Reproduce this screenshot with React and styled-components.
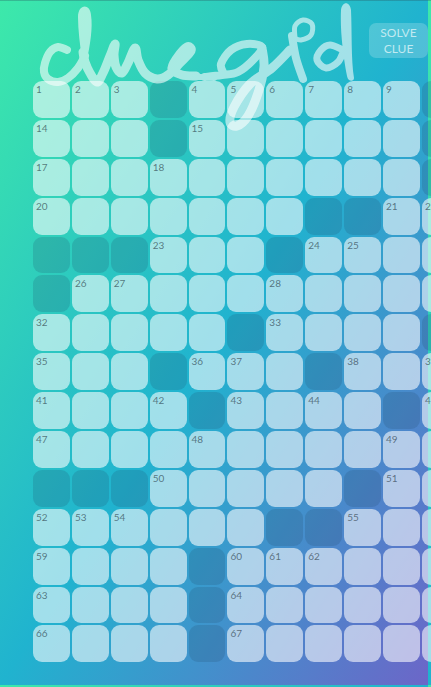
import React from "react";
import styled, { createGlobalStyle } from "styled-components";

const Global = createGlobalStyle`
  html {
    height: 100%;
    background-image: linear-gradient(to bottom right, #3de9aa 0%, #20b3cf 50%, #6c66c8 100%);
    background-size: 428px 685px;
    background-repeat: repeat;
  }
  body {
    margin: 0;
    font-family: "Lato", "Open Sans", sans-serif;
  }
`;

const Page = styled.main`
  position: relative;
  width: 431px;
  height: 687px;
  overflow: hidden;
  box-shadow: inset 0 1px 0 rgba(40, 80, 90, 0.3);
`;

const Header = styled.header`
  display: flex;
  justify-content: flex-end;
  align-items: flex-start;
  height: 81px;
  box-sizing: border-box;
  padding: 23px 3px 0 0;
`;

const SolveButton = styled.button`
  width: 59px;
  height: 35px;
  padding: 0;
  border: 0;
  border-radius: 7px;
  background: rgba(255, 255, 255, 0.2);
  color: rgba(255, 255, 255, 0.66);
  font-family: "Lato", "Open Sans", sans-serif;
  font-size: 12px;
  line-height: 16px;
  text-align: center;
`;

const Board = styled.section`
  display: grid;
  grid-template-columns: repeat(15, 36.9px);
  grid-auto-rows: 36.9px;
  gap: 2px;
  margin-left: 33px;
  width: max-content;
`;

const Cell = styled.div`
  position: relative;
  border-radius: 9px;
  box-sizing: border-box;
  padding: 3px 0 0 3px;
  background: ${(p) => (p.$block ? "rgba(30, 70, 100, 0.19)" : "rgba(255, 255, 255, 0.58)")};
`;

const Num = styled.span`
  display: block;
  font-size: 10px;
  line-height: 11px;
  color: rgba(30, 50, 60, 0.62);
`;

const LogoMark = styled.svg`
  position: absolute;
  left: 0;
  top: 0;
  width: 431px;
  height: 140px;
  pointer-events: none;
  opacity: 0.58;
`;

/* Smooth curve through traced points of the handwritten logo */
function curve(pts) {
  let d = `M${pts[0][0]} ${pts[0][1]}`;
  for (let i = 0; i < pts.length - 1; i++) {
    const a = pts[i - 1] || pts[i];
    const b = pts[i];
    const c = pts[i + 1];
    const e = pts[i + 2] || c;
    const c1 = [b[0] + (c[0] - a[0]) / 6, b[1] + (c[1] - a[1]) / 6];
    const c2 = [c[0] - (e[0] - b[0]) / 6, c[1] - (e[1] - b[1]) / 6];
    d += `C${c1[0].toFixed(1)} ${c1[1].toFixed(1)} ${c2[0].toFixed(1)} ${c2[1].toFixed(1)} ${c[0]} ${c[1]}`;
  }
  return d;
}

const strokes = [
  { w: 8, p: [[67, 50], [58, 47], [50, 52], [45, 63], [44, 72], [48, 79], [58, 82], [68, 78], [78, 68], [85, 56]] },
  { w: 9, p: [[83, 52], [85, 62], [90, 73], [97, 82], [103, 73], [110, 56], [115, 44], [114, 55], [116, 67], [122, 73], [128, 63], [135, 48], [138, 60], [145, 73], [157, 79], [168, 75], [180, 63], [191, 51], [187, 47], [177, 58], [172, 69], [182, 75], [196, 76]] },
  { w: 6, p: [[186, 76], [200, 77], [214, 78]] },
  { w: 8, p: [[205, 77], [222, 75], [238, 72], [254, 59], [262, 47], [247, 44], [231, 50], [221, 64], [224, 74]] },
  { w: 9, p: [[262, 48], [264, 67], [258, 93], [248, 116], [237, 126], [230, 122], [234, 107], [250, 84], [272, 68], [290, 50]] },
  { w: 8, p: [[292, 36], [296, 58], [303, 79]] },
  { w: 5, p: [[295, 38], [295, 26], [303, 20], [312, 24], [311, 35], [301, 40], [294, 38]] },
  { w: 7, p: [[343, 50], [330, 45], [321, 50], [317, 60], [326, 68], [338, 62], [344, 50]] },
];

const fills = [
  "M78 17C78 4 90 3 91 15C93 28 90 45 87 60L82 60C80 45 78 30 78 17Z",
  "M341 10C342 1 350 1 351 10C352 30 351 60 354 78C354 82 348 82 347 76C343 55 340 30 341 10Z",
];

const blocks = new Set([
  "0,3","0,10","1,3","1,10","2,10","3,7","3,8",
  "4,0","4,1","4,2","4,6","5,0","6,5","6,10",
  "7,3","7,7","8,4","8,9","10,0","10,1","10,2","10,8",
  "11,6","11,7","12,4","13,4","14,4",
]);

const numbers = {
  "0,0":1,"0,1":2,"0,2":3,"0,4":4,"0,5":5,"0,6":6,"0,7":7,"0,8":8,"0,9":9,
  "1,0":14,"1,4":15,
  "2,0":17,"2,3":18,
  "3,0":20,"3,9":21,"3,10":22,
  "4,3":23,"4,7":24,"4,8":25,
  "5,1":26,"5,2":27,"5,6":28,
  "6,0":32,"6,6":33,
  "7,0":35,"7,4":36,"7,5":37,"7,8":38,"7,10":39,
  "8,0":41,"8,3":42,"8,5":43,"8,7":44,"8,10":45,
  "9,0":47,"9,4":48,"9,9":49,
  "10,3":50,"10,9":51,
  "11,0":52,"11,1":53,"11,2":54,"11,8":55,
  "12,0":59,"12,5":60,"12,6":61,"12,7":62,
  "13,0":63,"13,5":64,
  "14,0":66,"14,5":67,
};

const cells = [];
for (let r = 0; r < 15; r++) {
  for (let c = 0; c < 15; c++) cells.push(`${r},${c}`);
}

export default function App() {
  return (
    <Page>
      <Global />
      <Header>
        <SolveButton>SOLVE<br />CLUE</SolveButton>
      </Header>
      <Board>
        {cells.map((k) => (
          <Cell key={k} $block={blocks.has(k)}>
            {numbers[k] ? <Num>{numbers[k]}</Num> : null}
          </Cell>
        ))}
      </Board>
      <LogoMark viewBox="0 0 431 140" role="img" aria-label="clue grid logo">
        {fills.map((d) => (
          <path key={d} d={d} fill="#fff" />
        ))}
        {strokes.map((s, i) => (
          <path key={i} d={curve(s.p)} fill="none" stroke="#fff" strokeWidth={s.w} strokeLinecap="round" strokeLinejoin="round" />
        ))}
      </LogoMark>
    </Page>
  );
}
